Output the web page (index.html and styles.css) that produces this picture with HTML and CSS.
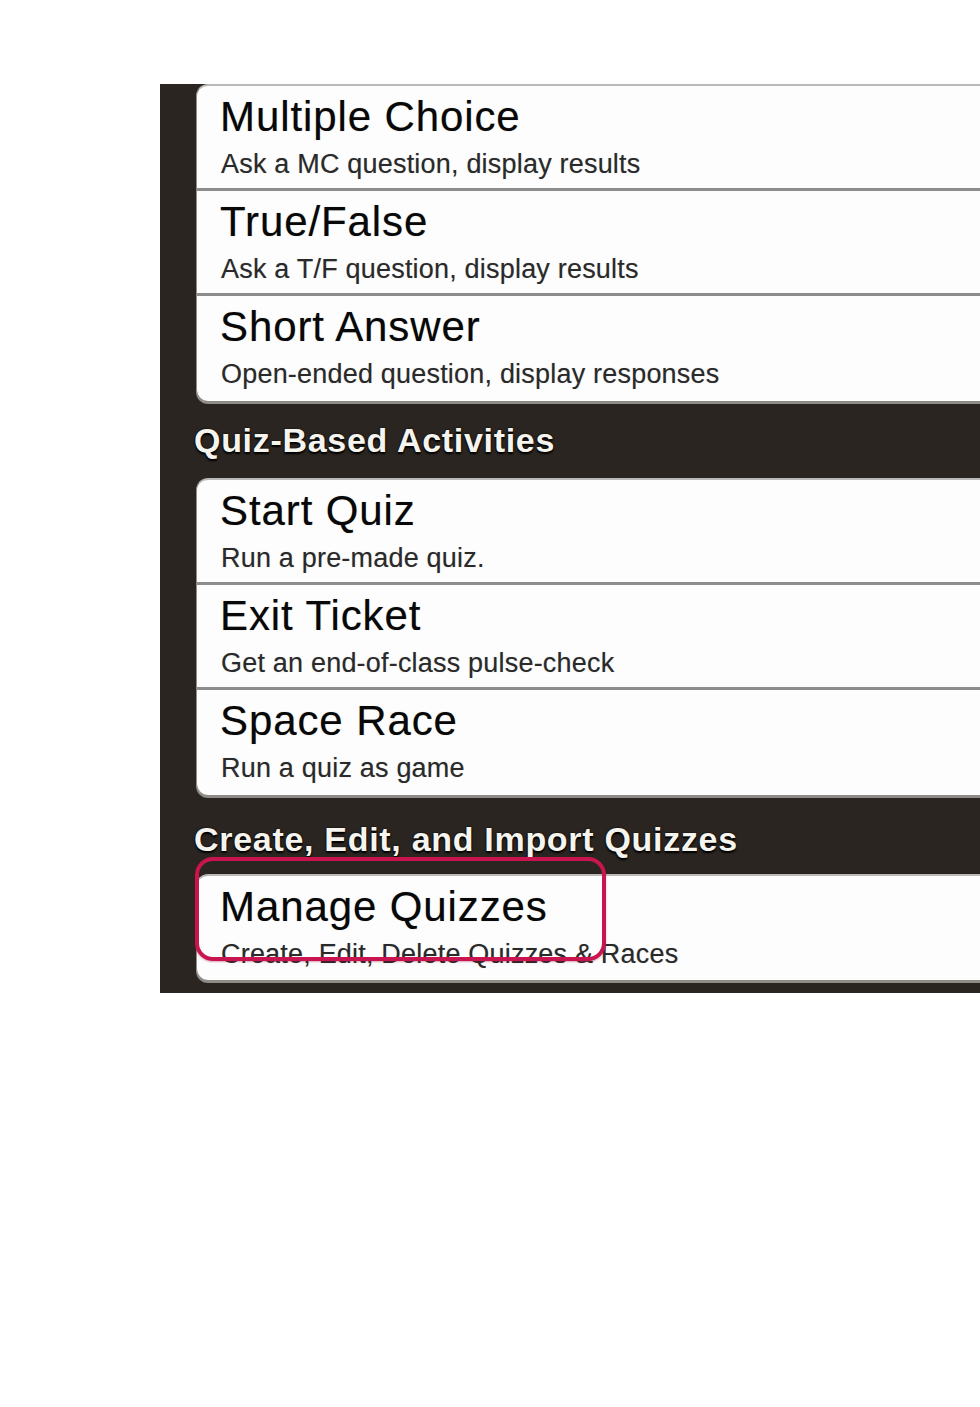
FILE: index.html
```html
<!DOCTYPE html>
<html>
<head>
<meta charset="utf-8">
<link rel="stylesheet" href="styles.css">
</head>
<body>
<div class="page">
  <div class="panel">
    <div class="group">
      <div class="row">
        <div class="title">Multiple Choice</div>
        <div class="sub">Ask a MC question, display results</div>
      </div>
      <div class="row">
        <div class="title">True/False</div>
        <div class="sub">Ask a T/F question, display results</div>
      </div>
      <div class="row">
        <div class="title">Short Answer</div>
        <div class="sub">Open-ended question, display responses</div>
      </div>
    </div>

    <div class="header">Quiz-Based Activities</div>

    <div class="group">
      <div class="row">
        <div class="title">Start Quiz</div>
        <div class="sub">Run a pre-made quiz.</div>
      </div>
      <div class="row">
        <div class="title">Exit Ticket</div>
        <div class="sub">Get an end-of-class pulse-check</div>
      </div>
      <div class="row">
        <div class="title">Space Race</div>
        <div class="sub">Run a quiz as game</div>
      </div>
    </div>

    <div class="header header-second">Create, Edit, and Import Quizzes</div>

    <div class="group group-last">
      <div class="row row-single">
        <div class="title">Manage Quizzes</div>
        <div class="sub">Create, Edit, Delete Quizzes &amp; Races</div>
      </div>
      <div class="highlight"></div>
    </div>
  </div>
</div>
</body>
</html>
```

FILE: styles.css
```css
html, body {
  margin: 0;
  padding: 0;
  background: #ffffff;
}

.page {
  width: 980px;
  overflow: hidden;
  padding-top: 84px;
}

.panel {
  margin-left: 160px;
  width: 820px;
  background: #2a2520;
  padding: 0 0 13px 36px;
  box-sizing: border-box;
  display: flex;
  flex-direction: column;
}

.group {
  position: relative;
  background: #fdfdfd;
  border-top: 2px solid #b9b9b9;
  border-left: 1px solid #8e8e8e;
  border-radius: 12px 0 0 12px;
  box-shadow: 0 3px 0 #8f8c88;
  display: flex;
  flex-direction: column;
}

.row {
  height: 105px;
  box-sizing: border-box;
  padding: 10px 0 0 23px;
  border-bottom: 3px solid #8d8d8d;
  font-family: "Liberation Sans", Arial, Helvetica, sans-serif;
}

.row:last-child,
.row-single {
  border-bottom: none;
}

.row-single {
  height: 104px;
}

.title {
  font-size: 42px;
  line-height: 42px;
  letter-spacing: 0.9px;
  color: #080808;
  text-shadow: 0 0 1px rgba(0, 0, 0, 0.35);
}

.sub {
  margin-top: 13px;
  margin-left: 1px;
  font-size: 27px;
  line-height: 27px;
  letter-spacing: 0.2px;
  color: #2a2a2a;
  text-shadow: 0 0 1px rgba(0, 0, 0, 0.25);
}

.header {
  padding: 22px 0 21px 0;
  margin-left: -2px;
  font-family: "Liberation Sans", Arial, Helvetica, sans-serif;
  font-weight: bold;
  font-size: 34px;
  line-height: 34px;
  letter-spacing: 0.7px;
  color: #f6f4ee;
  text-shadow: 0 2px 2px #000000, 0 0 2px #000000;
}

.header-second {
  padding: 27px 0 18px 0;
}

.highlight {
  position: absolute;
  left: -2px;
  top: -19px;
  width: 403px;
  height: 96px;
  border: 4px solid #c8154f;
  border-radius: 18px;
  box-shadow: 0 1px 2px rgba(150, 0, 40, 0.35);
}
```
